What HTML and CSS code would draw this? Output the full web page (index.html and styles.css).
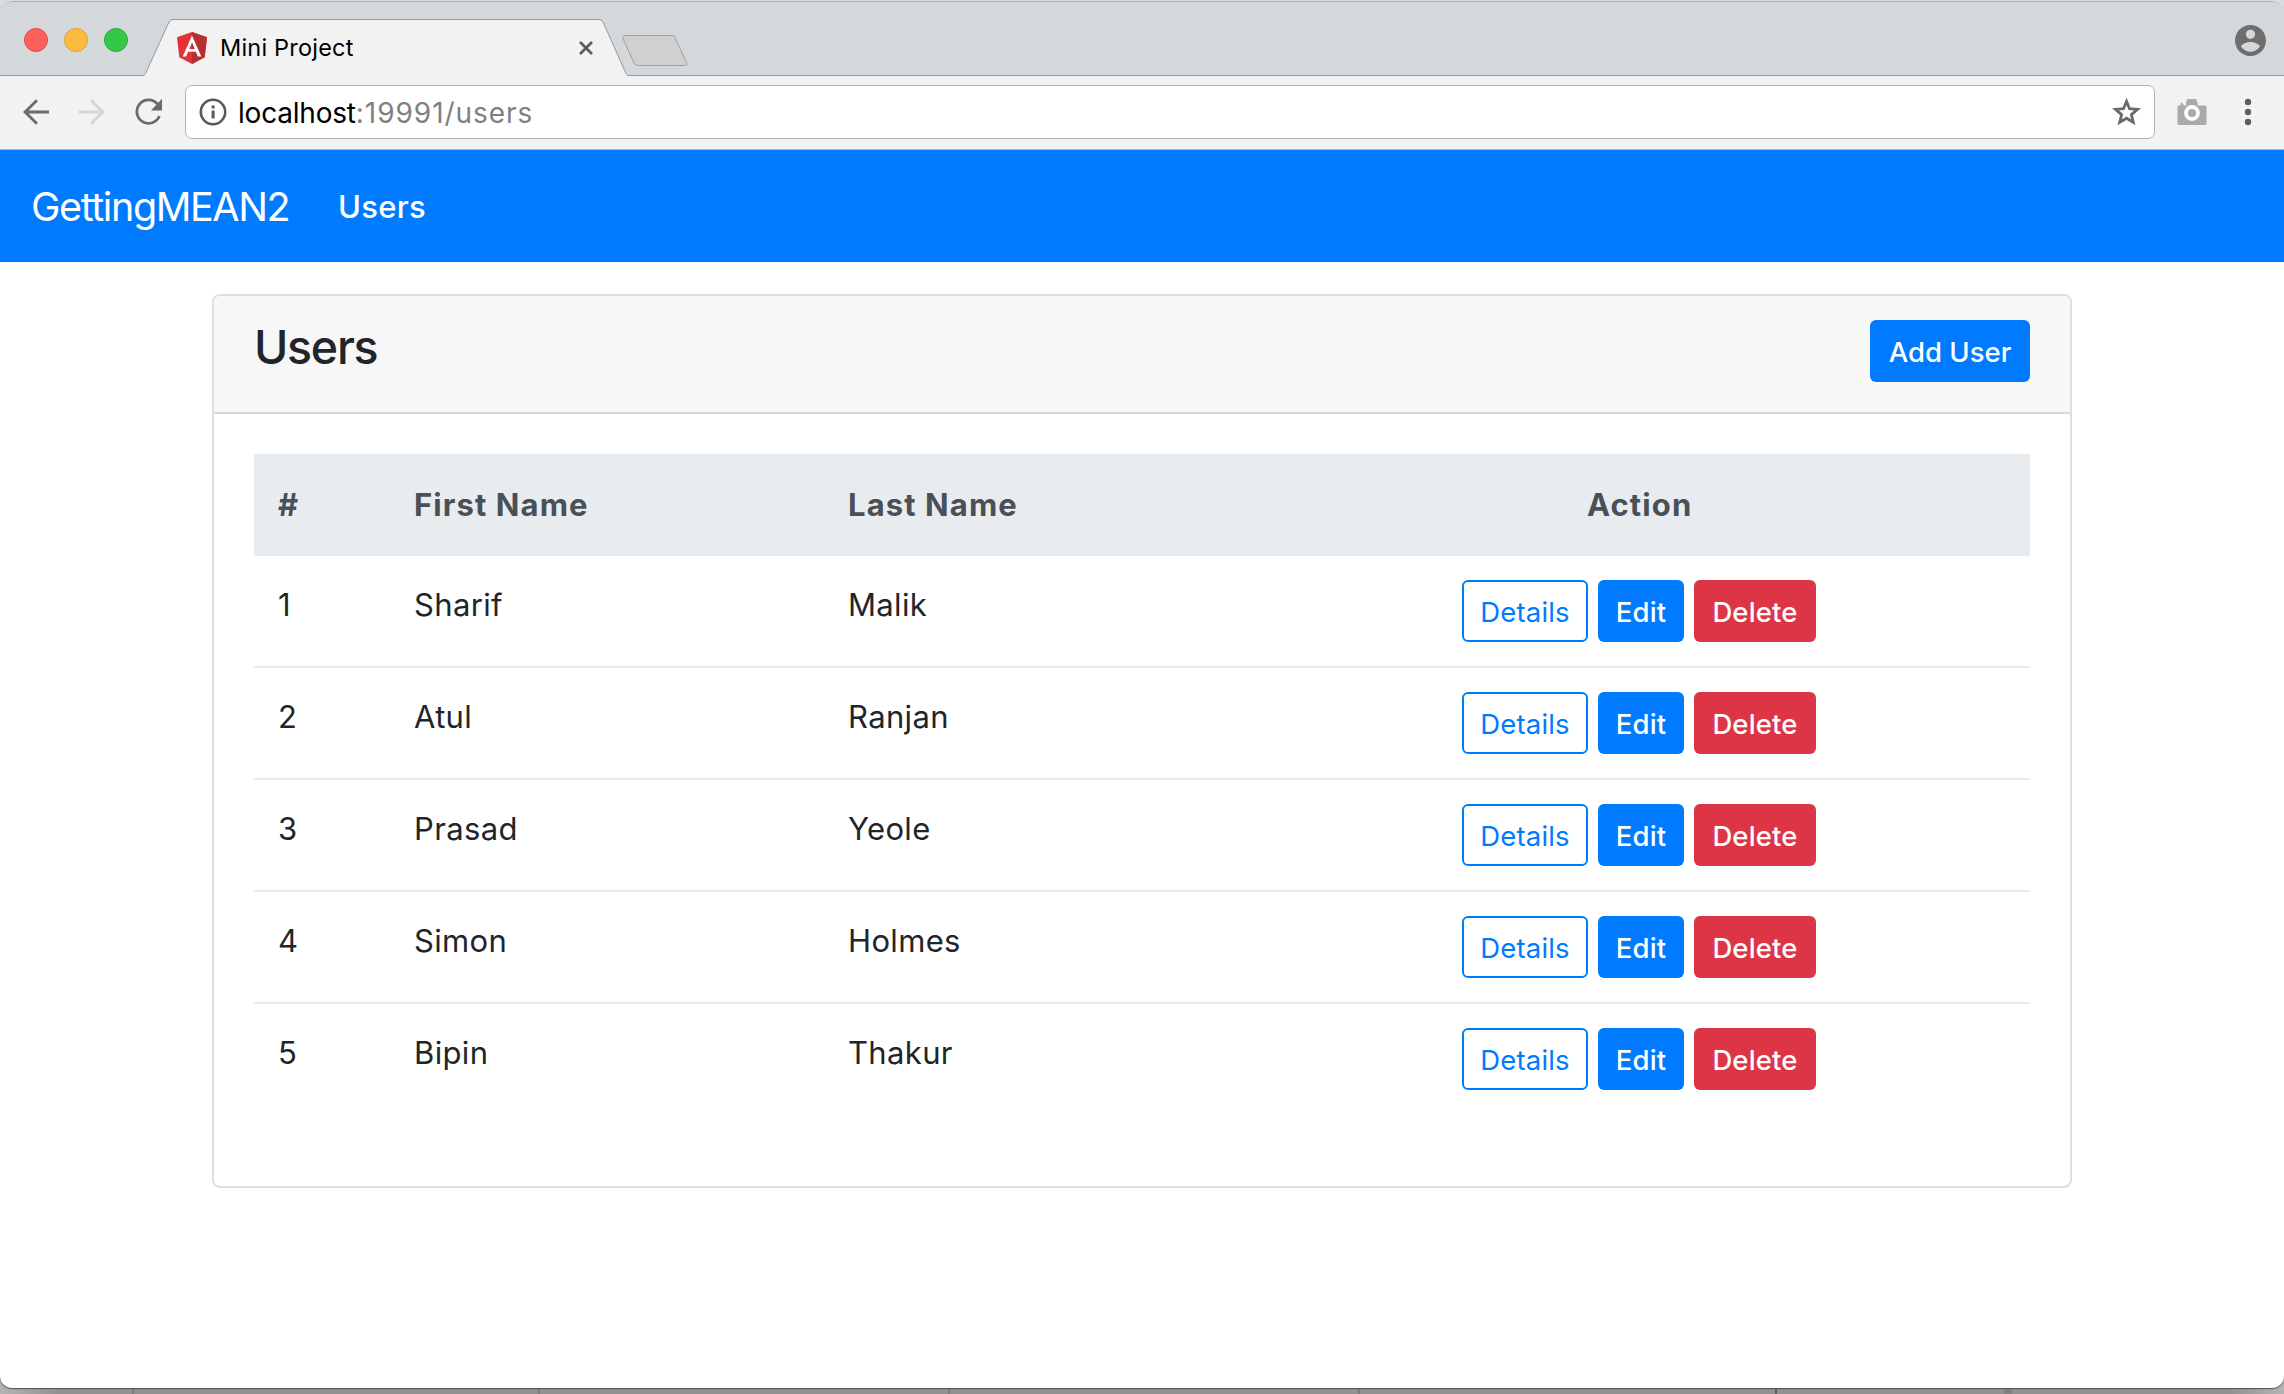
FILE: index.html
```
<!DOCTYPE html>
<html lang="en">
<head>
<meta charset="utf-8">
<title>Mini Project</title>
<link rel="stylesheet" href="styles.css">
</head>
<body>
<div class="window">
  <div class="tabstrip">
    <div class="lights"><i class="light close"></i><i class="light min"></i><i class="light max"></i></div>
    <div class="tab">
      <svg class="tab-shape" width="486" height="58" viewBox="0 0 486 58"><path d="M0 58V56.5Q1.500 56.5 2.500 54.500L26 3Q27.300.5 30 .5H455.500Q458.500.5 460 3L483 54.500Q484 56.500 486 56.500V58Z" fill="#f2f2f2"/><path d="M0 56.500Q1.500 56.500 2.500 54.500L26 3Q27.300.5 30 .5H455.500Q458.500.5 460 3L483 54.500Q484 56.500 486 56.500" fill="none" stroke="#96989b"/></svg>
      <svg class="favicon" width="30" height="32" viewBox="0 0 30 32"><path d="M15 0 0 5.300 2.300 25.200 15 32 27.700 25.200 30 5.300Z" fill="#e23237"/><path d="M15 0V32L27.700 25.200 30 5.300Z" fill="#b52e31"/><path d="M15 3.600 5.700 24.500H9.200L11.100 19.800H18.900L20.800 24.500H24.300ZM15 10.200 17.700 16.900H12.300Z" fill="#fff" fill-rule="evenodd"/></svg>
      <span class="tab-title">Mini Project</span>
      <svg class="tab-close" width="14" height="14" viewBox="0 0 14 14"><path d="M1 1 13 13M13 1 1 13" stroke="#5a5a5a" stroke-width="2.600"/></svg>
    </div>
    <svg class="newtab" width="68" height="34" viewBox="0 0 68 34"><path d="M4 1.500H50.500Q53 1.500 54 3.500L65.500 28.500Q67 31.500 64.500 31.500H17.500Q14.500 31.500 13 29L2 4.500Q1 1.500 4 1.500Z" fill="#d0d0d0" stroke="#a0a0a0"/></svg>
    <svg class="avatar" width="31" height="31" viewBox="2 2 20 20"><path fill="#6e6e6e" d="M12 2C6.480 2 2 6.480 2 12s4.480 10 10 10 10-4.480 10-10S17.520 2 12 2zm0 3c1.660 0 3 1.340 3 3s-1.340 3-3 3-3-1.340-3-3 1.340-3 3-3zm0 14.200c-2.500 0-4.710-1.280-6-3.220.03-1.990 4-3.080 6-3.080 1.990 0 5.970 1.090 6 3.080-1.290 1.940-3.500 3.220-6 3.220z"/></svg>
  </div>
  <div class="toolbar">
    <svg class="back" width="26" height="26" viewBox="0 0 26 26"><path d="M14 1.200 2 13 14 24.800M2 13H26" fill="none" stroke="#6b6b6b" stroke-width="2.800"/></svg>
    <svg class="forward" width="26" height="26" viewBox="0 0 26 26"><path d="M12 1.200 24 13 12 24.800M0 13H24" fill="none" stroke="#d5d5d5" stroke-width="2.800"/></svg>
    <svg class="reload" width="28" height="28" viewBox="0 0 28 28"><path d="M22.600 6.200A11.700 11.700 0 1 0 24.400 18" fill="none" stroke="#6b6b6b" stroke-width="2.800"/><path d="M27 .8V12.500H16Z" fill="#6b6b6b"/></svg>
    <div class="omnibox">
      <svg class="info" width="28" height="28" viewBox="0 0 28 28"><circle cx="14" cy="14" r="12.200" fill="none" stroke="#5a5a5a" stroke-width="2.600"/><path d="M12.600 7.600H15.600V10.400H12.600ZM12.600 12.600H15.600V20.600H12.600Z" fill="#5a5a5a"/></svg>
      <span class="url">localhost<span class="path">:19991/users</span></span>
      <svg class="star" width="29" height="28" viewBox="0 0 29 28"><path d="M14.500 3.400 17.500 10.700 25.500 11.400 19.400 16.600 21.300 24.300 14.500 20.200 7.700 24.300 9.600 16.600 3.500 11.400 11.500 10.700Z" fill="none" stroke="#6b6b6b" stroke-width="2.800"/></svg>
    </div>
    <svg class="camera" width="30" height="28" viewBox="0 0 30 28"><path d="M2 7.500H3.500V5.500L5 4.500 7 7.500H9V4Q9 3 10 3V2Q10 1 11 1H18.500Q19.500 1 19.500 2V3Q20.500 3 20.500 4V7.500H28Q29.500 7.500 29.500 9V25.500Q29.500 27 28 27H2Q.5 27 .5 25.500V9Q.5 7.500 2 7.500Z" fill="#aaa"/><circle cx="15" cy="15" r="6" fill="#aaa" stroke="#fff" stroke-width="3.800"/></svg>
    <svg class="dots" width="8" height="28" viewBox="0 0 8 28"><g fill="#5e5e5e"><circle cx="4" cy="4" r="3.200"/><circle cx="4" cy="14" r="3.200"/><circle cx="4" cy="24" r="3.200"/></g></svg>
  </div>
  <nav class="navbar"><a class="brand">GettingMEAN2</a><a class="navlink">Users</a></nav>
  <main class="page">
    <section class="card">
      <header class="card-header"><h3>Users</h3><a class="btn primary add">Add User</a></header>
      <div class="card-body">
        <div class="row head"><span>#</span><span>First Name</span><span>Last Name</span><span class="action">Action</span></div>
        <div class="row"><span>1</span><span>Sharif</span><span>Malik</span><span class="btns"><a class="btn outline">Details</a><a class="btn primary edit">Edit</a><a class="btn danger">Delete</a></span></div>
        <div class="row"><span>2</span><span>Atul</span><span>Ranjan</span><span class="btns"><a class="btn outline">Details</a><a class="btn primary edit">Edit</a><a class="btn danger">Delete</a></span></div>
        <div class="row"><span>3</span><span>Prasad</span><span>Yeole</span><span class="btns"><a class="btn outline">Details</a><a class="btn primary edit">Edit</a><a class="btn danger">Delete</a></span></div>
        <div class="row"><span>4</span><span>Simon</span><span>Holmes</span><span class="btns"><a class="btn outline">Details</a><a class="btn primary edit">Edit</a><a class="btn danger">Delete</a></span></div>
        <div class="row"><span>5</span><span>Bipin</span><span>Thakur</span><span class="btns"><a class="btn outline">Details</a><a class="btn primary edit">Edit</a><a class="btn danger">Delete</a></span></div>
      </div>
    </section>
  </main>
</div>
</body>
</html>
```
FILE: styles.css
```
* { box-sizing: border-box; }
body {
  margin: 0;
  height: 1394px;
  overflow: hidden;
  font-family: Inter, "Liberation Sans", sans-serif;
  font-size: 31px;
  line-height: 50px;
  color: #212529;
  background:
    linear-gradient(#7c7c7c, #7c7c7c) 132px 100% / 2px 8px no-repeat,
    linear-gradient(#7c7c7c, #7c7c7c) 538px 100% / 2px 8px no-repeat,
    linear-gradient(#7c7c7c, #7c7c7c) 948px 100% / 2px 8px no-repeat,
    linear-gradient(#7c7c7c, #7c7c7c) 1358px 100% / 2px 8px no-repeat,
    linear-gradient(#606060, #606060) 1775px 100% / 2px 8px no-repeat,
    linear-gradient(#828282, #828282) 2004px 100% / 8px 8px no-repeat,
    linear-gradient(90deg, #b4b4b4, #919191 60px, #919191 2230px, #b4b4b4) 0 100% / 100% 20px no-repeat,
    #dcdcdc;
}
.window {
  display: flex;
  flex-direction: column;
  height: 1388px;
  border-top: 1px solid #dcdcdc;
  border-radius: 12px;
  overflow: hidden;
  background: #fff;
  box-shadow: 0 1px 1px #4f5350;
}
.tabstrip {
  display: flex;
  align-items: flex-start;
  height: 75px;
  background: #d4d8db;
  border-top: 1px solid #b0b0b0;
  border-bottom: 1px solid #96989b;
  border-radius: 12px 12px 0 0;
}
.lights { display: flex; gap: 16px; padding: 26px 0 0 24px; width: 143px; }
.light { width: 24px; height: 24px; flex: none; border-radius: 50%; border: 1px solid; }
.close { background: #fc605c; border-color: #df4744; }
.min { background: #fdbc40; border-color: #de9f34; }
.max { background: #34c84a; border-color: #27aa35; }
.tab { display: flex; position: relative; width: 486px; height: 58px; margin-top: 17px; padding-left: 34px; }
.tab-shape { position: absolute; left: 0; top: 0; }
.favicon { position: relative; margin-top: 13px; }
.tab-title { position: relative; width: 372px; padding-left: 13px; font-size: 23.500px; letter-spacing: .2px; line-height: 57px; color: #000; }
.tab-close { position: relative; margin-top: 22px; }
.newtab { margin: 32px 0 0 -8px; }
.avatar { margin: 23px 18.500px 0 auto; }
.toolbar { display: flex; align-items: center; height: 74px; flex: none; padding: 0 32px 1px 23px; background: #f2f2f2; border-bottom: 1px solid #b5b5b5; }
.forward { margin-left: 30px; }
.reload { margin-left: 29.500px; }
.omnibox { display: flex; align-items: center; width: 1970px; height: 54px; margin-left: 22.500px; padding: 0 13px; border: 1px solid #b4b4b4; border-radius: 7px; background: #fff; }
.url { flex: 1; padding-top: 1px; margin-left: 11px; font-size: 28px; letter-spacing: -.2px; color: #000; }
.path { color: #808080; letter-spacing: .950px; }
.camera { margin-left: 22px; }
.dots { margin-left: 37px; }
.navbar { display: flex; height: 112px; flex: none; padding: 1px 0 0 31px; line-height: 112px; color: #fff; background: #007bff; }
.brand { width: 307px; font-size: 39.500px; letter-spacing: -1.400px; }
.navlink { font-weight: 500; letter-spacing: .3px; }
.page { flex: 1; padding: 32px 212px; }
.card { height: 894px; border: 2px solid #dfdfdf; border-radius: 8px; overflow: hidden; }
.card-header { display: flex; justify-content: space-between; height: 118px; padding: 24px 40px; background: #f7f7f7; border-bottom: 2px solid #d8d8d8; }
h3 { margin: 0; font-size: 46.500px; line-height: 55px; font-weight: 500; letter-spacing: -1.300px; }
.card-body { padding: 40px; }
.row { display: grid; grid-template-columns: 136px 434px 435px 1fr; height: 112px; padding: 24px 24px 0; border-top: 2px solid #e9ecef; letter-spacing: .35px; }
.head { height: 100px; padding-top: 26px; background: #e9ecef; color: #495057; font-weight: 700; line-height: 46px; letter-spacing: 1.100px; }
.action { padding-left: 304px; }
.btns { display: flex; gap: 10px; padding-left: 179px; letter-spacing: .15px; }
.btn { height: 62px; border-radius: 6px; text-align: center; font-size: 27.500px; line-height: 64px; color: #fff; font-weight: 500; }
.primary { background: #007bff; }
.danger { width: 122px; background: #dc3545; }
.edit { width: 86px; }
.add { width: 160px; }
.outline { width: 126px; border: 2px solid #007bff; color: #007bff; line-height: 60px; font-weight: 400; }
```
